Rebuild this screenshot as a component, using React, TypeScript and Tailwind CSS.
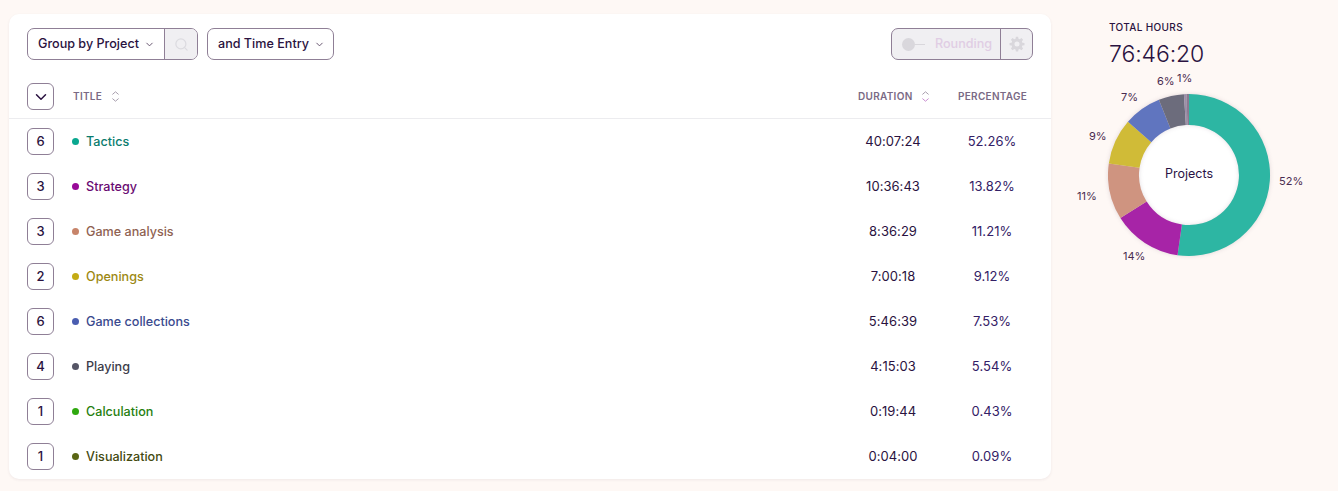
import { ChevronDown, Search } from 'lucide-react';

const ROWS = [
  { count: 6, title: 'Tactics', dot: 'bg-[#0aa78f]', text: 'text-[#0a7c6e]', duration: '40:07:24', pct: '52.26%' },
  { count: 3, title: 'Strategy', dot: 'bg-[#980a98]', text: 'text-[#690a72]', duration: '10:36:43', pct: '13.82%' },
  { count: 3, title: 'Game analysis', dot: 'bg-[#c7846a]', text: 'text-[#8f6252]', duration: '8:36:29', pct: '11.21%' },
  { count: 2, title: 'Openings', dot: 'bg-[#c4ab14]', text: 'text-[#9c8812]', duration: '7:00:18', pct: '9.12%' },
  { count: 6, title: 'Game collections', dot: 'bg-[#4a5db0]', text: 'text-[#3a4a8e]', duration: '5:46:39', pct: '7.53%' },
  { count: 4, title: 'Playing', dot: 'bg-[#555566]', text: 'text-[#3c3c4a]', duration: '4:15:03', pct: '5.54%' },
  { count: 1, title: 'Calculation', dot: 'bg-[#2fa80f]', text: 'text-[#27800f]', duration: '0:19:44', pct: '0.43%' },
  { count: 1, title: 'Visualization', dot: 'bg-[#5a6614]', text: 'text-[#444a10]', duration: '0:04:00', pct: '0.09%' },
];

// Las dos últimas porciones se dibujan más anchas que su valor real, como en la captura
const SLICES = [
  { value: 52.26, color: '#2db6a3' },
  { value: 13.82, color: '#a724a7' },
  { value: 11.21, color: '#cf9480' },
  { value: 9.12, color: '#d0bb37' },
  { value: 7.53, color: '#6075bf' },
  { value: 5.06, color: '#6c6c7c' },
  { value: 0.5, color: '#9b8fa8' },
  { value: 0.5, color: '#8a7a92' },
];

const LABELS = [
  { text: '52%', x: 209, y: 116 },
  { text: '14%', x: 53, y: 191 },
  { text: '11%', x: 7, y: 131 },
  { text: '9%', x: 19, y: 71 },
  { text: '7%', x: 51, y: 32 },
  { text: '6%', x: 87, y: 16 },
  { text: '1%', x: 107, y: 13 },
];

function slicePath(from: number, to: number) {
  const cx = 119;
  const cy = 106;
  const R = 81;
  const r = 50;
  const a0 = (from / 100) * Math.PI * 2 - Math.PI / 2;
  const a1 = (to / 100) * Math.PI * 2 - Math.PI / 2;
  const large = to - from > 50 ? 1 : 0;
  const p = (rad: number, a: number) => `${(cx + rad * Math.cos(a)).toFixed(2)} ${(cy + rad * Math.sin(a)).toFixed(2)}`;
  return `M${p(R, a0)}A${R} ${R} 0 ${large} 1 ${p(R, a1)}L${p(r, a1)}A${r} ${r} 0 ${large} 0 ${p(r, a0)}Z`;
}

function Donut() {
  let acc = 0;
  return (
    <svg width="240" height="200" viewBox="0 0 240 200" className="mt-[1px] ml-[-39px] shrink-0">
      <circle cx="119" cy="106" r="50" fill="#fff" />
      <g className="drop-shadow-[0_0_2px_rgba(60,30,60,0.15)]">
        {SLICES.map((s) => {
          const d = slicePath(acc, acc + s.value);
          acc += s.value;
          return <path key={s.color} d={d} fill={s.color} />;
        })}
      </g>
      <text x="119" y="109" textAnchor="middle" fontSize="12.5" fill="#2a1245">Projects</text>
      {LABELS.map((l) => (
        <text key={l.text} x={l.x} y={l.y} fontSize="11" fill="#4a2c50">{l.text}</text>
      ))}
    </svg>
  );
}

// Flechas de orden: dos chevrones separados
function SortIcon({ down = '#a89fae' }: { down?: string }) {
  return (
    <svg width="7" height="11" viewBox="0 0 7 11" fill="none" strokeWidth="1" strokeLinecap="round" strokeLinejoin="round">
      <path d="M.7 3.2 3.5.8 6.3 3.2" stroke="#a89fae" />
      <path d="M.7 7.8 3.5 10.2 6.3 7.8" stroke={down} />
    </svg>
  );
}

function Gear() {
  return (
    <svg width="16" height="16" viewBox="0 0 24 24" fill="#d9d7dc" fillRule="evenodd">
      <path d="M10.3 1h3.4l.5 3.1 1.9.8 2.6-1.8 2.4 2.4-1.8 2.6.8 1.9 3.1.5v3.4l-3.1.5-.8 1.9 1.8 2.6-2.4 2.4-2.6-1.8-1.9.8-.5 3.1h-3.4l-.5-3.1-1.9-.8-2.6 1.8-2.4-2.4 1.8-2.6-.8-1.9-3.1-.5v-3.4l3.1-.5.8-1.9-1.8-2.6 2.4-2.4 2.6 1.8 1.9-.8zM12 8.2a3.8 3.8 0 1 0 0 7.6 3.8 3.8 0 0 0 0-7.6z" />
    </svg>
  );
}

function CountBox({ children }: { children: React.ReactNode }) {
  return (
    <div className="flex h-[27px] w-[27px] shrink-0 items-center justify-center rounded-[6px] border border-[#8f7f96] bg-white text-[13px] font-medium text-[#2a1240]">
      {children}
    </div>
  );
}

export default function App() {
  return (
    <div className="flex h-[491px] overflow-hidden bg-[#fef8f5] pt-[14px] pl-[9px] font-['Inter',sans-serif] text-[#2a1240]">
      <div className="h-[465px] w-[1042px] shrink-0 rounded-[10px] bg-white shadow-[0_1px_3px_rgba(60,30,60,0.07)]">
        {/* Barra de filtros */}
        <div className="flex h-[46px] items-end justify-between pr-[18px] pl-[18px]">
          <div className="flex gap-[9px]">
            <div className="flex h-[32px] overflow-hidden rounded-[7px] border border-[#8f7f96]">
              <div className="flex w-[137px] items-center gap-[5px] border-r border-[#8f7f96] pl-[10px] text-[12.6px] font-medium">
                Group by Project <ChevronDown className="h-[11px] w-[11px] text-[#5d4a66]" />
              </div>
              <div className="flex w-[32px] items-center justify-center bg-[#f0eff2]">
                <Search className="h-[15px] w-[15px] text-[#dcdbe0]" />
              </div>
            </div>
            <div className="flex h-[32px] w-[127px] items-center gap-[5px] rounded-[7px] border border-[#8f7f96] pl-[10px] text-[12.6px] font-medium">
              and Time Entry <ChevronDown className="h-[11px] w-[11px] text-[#5d4a66]" />
            </div>
          </div>
          <div className="flex h-[32px] w-[142px] overflow-hidden rounded-[7px] border border-[#8f7f96] bg-[#f0eff2]">
            <div className="flex w-[109px] items-center border-r border-[#8f7f96] pl-[10px]">
              <span className="h-[13px] w-[13px] rounded-full bg-[#d9d7dc]" />
              <span className="h-[1px] w-[10px] bg-[#d9d7dc]" />
              <span className="ml-[10px] text-[12.6px] font-medium text-[#e0cde4]">Rounding</span>
            </div>
            <div className="flex flex-1 items-center justify-center">
              <Gear />
            </div>
          </div>
        </div>

        {/* Encabezado */}
        <div className="mt-[23px] flex h-[36px] items-start border-b border-[#ececef] pl-[18px]">
          <CountBox>
            <ChevronDown className="h-[18px] w-[18px]" strokeWidth={2} />
          </CountBox>
          <div className="ml-[19px] flex h-[27px] flex-1 items-center gap-[10px] text-[10px] font-semibold tracking-[0.3px] text-[#7a6a85]">
            TITLE <SortIcon />
          </div>
          <div className="flex h-[27px] w-[91px] items-center gap-[9px] text-[10px] font-semibold tracking-[0.3px] text-[#7a6a85]">
            DURATION <SortIcon down="#c98fd0" />
          </div>
          <div className="flex h-[27px] w-[102px] items-center pl-[9px] text-[10px] font-semibold tracking-[0.3px] text-[#7a6a85]">
            PERCENTAGE
          </div>
        </div>

        {/* Filas */}
        <div>
          {ROWS.map((row) => (
            <div key={row.title} className="flex h-[45px] items-center pl-[18px]">
              <CountBox>{row.count}</CountBox>
              <span className={`ml-[18px] h-[7px] w-[7px] rounded-full ${row.dot}`} />
              <span className={`ml-[7px] flex-1 pt-[1px] text-[12.6px] font-medium ${row.text}`}>{row.title}</span>
              <span className="w-[80px] text-center text-[13px] tracking-[0.05px]">{row.duration}</span>
              <span className="mr-[19px] ml-[19px] w-[80px] text-center text-[13px] tracking-[0.05px] text-[#332066]">{row.pct}</span>
            </div>
          ))}
        </div>
      </div>

      {/* Resumen */}
      <div className="ml-[58px] flex w-[200px] flex-col">
        <div className="mt-[6px] text-[10px] leading-[14px] font-medium tracking-[0.35px]">TOTAL HOURS</div>
        <div className="mt-[6px] text-[23px] leading-[28px] font-light tracking-[-0.1px]">76:46:20</div>
        <Donut />
      </div>
    </div>
  );
}
